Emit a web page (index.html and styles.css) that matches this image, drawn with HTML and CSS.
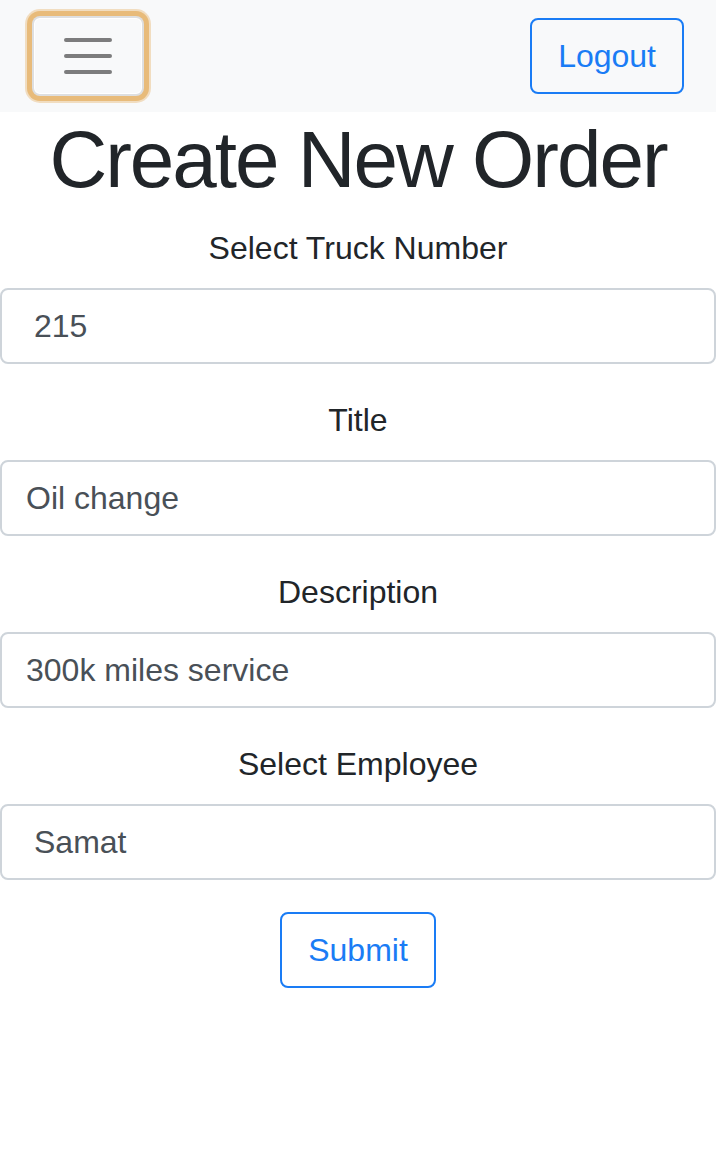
FILE: index.html
```html
<!DOCTYPE html>
<html>
<head>
<meta charset="utf-8">
<link rel="stylesheet" href="styles.css">
<title>Create New Order</title>
</head>
<body>
<nav class="navbar">
  <button class="toggler" type="button" aria-label="Toggle navigation">
    <svg class="toggler-icon" viewBox="0 0 30 30" width="60" height="60">
      <path d="M4 7h22M4 15h22M4 23h22" stroke="rgba(0,0,0,0.5)" stroke-width="2" stroke-linecap="round" fill="none"/>
    </svg>
  </button>
  <button class="btn btn-outline" type="button">Logout</button>
</nav>
<main class="page">
  <h1 class="title">Create New Order</h1>
  <form class="form">
    <div class="group">
      <label class="label" for="truck">Select Truck Number</label>
      <select class="control select" id="truck"><option>215</option></select>
    </div>
    <div class="group">
      <label class="label" for="title">Title</label>
      <input class="control" id="title" type="text" value="Oil change">
    </div>
    <div class="group">
      <label class="label" for="desc">Description</label>
      <input class="control" id="desc" type="text" value="300k miles service">
    </div>
    <div class="group">
      <label class="label" for="emp">Select Employee</label>
      <select class="control select" id="emp"><option>Samat</option></select>
    </div>
    <div class="actions">
      <button class="btn btn-outline" type="button">Submit</button>
    </div>
  </form>
</main>
</body>
</html>
```
FILE: styles.css
```css
* { box-sizing: border-box; }
html, body {
  margin: 0;
  padding: 0;
  background: #fff;
}
body {
  font-family: "Liberation Sans", Arial, Helvetica, sans-serif;
  font-size: 32px;
  line-height: 1.5;
  color: #212529;
}
.navbar {
  display: flex;
  align-items: center;
  justify-content: space-between;
  height: 112px;
  padding: 16px 32px;
  background: #f8f9fa;
}
.toggler {
  display: flex;
  align-items: center;
  justify-content: center;
  width: 112px;
  height: 80px;
  padding: 8px 24px;
  background: #f8f9fa;
  border: 2px solid rgba(0,0,0,0.1);
  border-radius: 8px;
  box-shadow: inset 0 0 0 1px #fff, 0 0 0 5px #e8bb7a, 0 0 0 7px rgba(232,187,122,0.45);
  cursor: pointer;
}
.toggler-icon { display: block; }
.btn {
  font-family: inherit;
  font-size: 32px;
  line-height: 48px;
  height: 76px;
  padding: 12px 26px;
  border-radius: 8px;
  background: transparent;
  cursor: pointer;
}
.btn-outline {
  color: #1a7cf5;
  border: 2px solid #1a7cf5;
}
.page { padding: 0; }
.title {
  margin: 0 0 16px;
  font-size: 80px;
  font-weight: 500;
  line-height: 1.2;
  letter-spacing: -2px;
  text-align: center;
  color: #212529;
}
.form { display: flex; flex-direction: column; }
.group {
  display: flex;
  flex-direction: column;
  margin-bottom: 32px;
}
.label {
  display: block;
  margin-bottom: 16px;
  text-align: center;
  line-height: 48px;
}
.control {
  display: block;
  width: 100%;
  height: 76px;
  padding: 12px 24px;
  font-family: inherit;
  font-size: 32px;
  line-height: 48px;
  color: #495057;
  background: #fff;
  border: 2px solid #ced4da;
  border-radius: 8px;
  outline: none;
}
.select {
  -webkit-appearance: none;
  appearance: none;
  padding-left: 32px;
}
.actions {
  display: flex;
  justify-content: center;
}
```
